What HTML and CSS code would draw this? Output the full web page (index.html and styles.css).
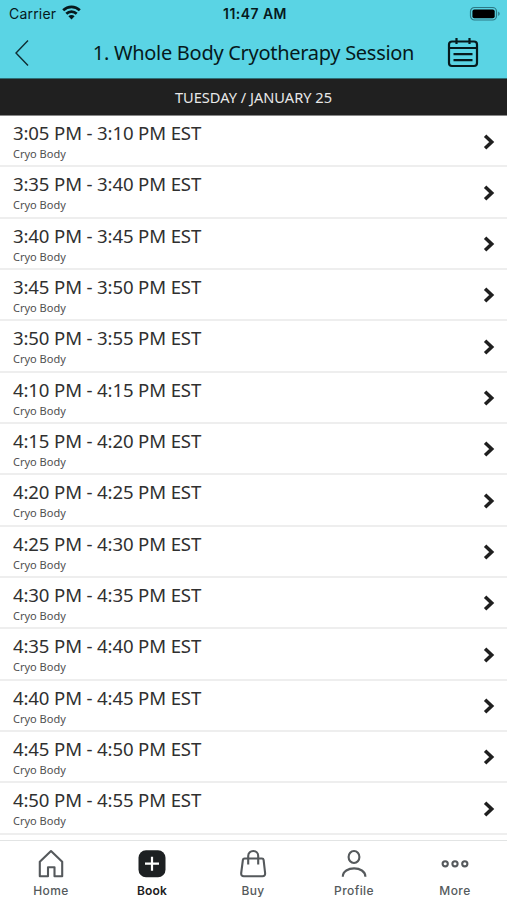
FILE: index.html
```
<!DOCTYPE html>
<html lang="en">
<head>
<meta charset="utf-8">
<title>Book a session</title>
<link rel="stylesheet" href="styles.css">
</head>
<body>
<svg class="defs" width="0" height="0"><symbol id="chev" viewBox="0 0 12 18"><path d="M2.1 2.8 8.7 9l-6.6 6.2" fill="none" stroke="#1f1f1f" stroke-width="3.5"/></symbol></svg>
<div class="app">
  <header class="top">
    <div class="status">
      <div class="carrier"><span>Carrier</span>
        <svg width="19" height="15" viewBox="0 0 19 15"><g fill="none" stroke="#06191c" stroke-width="2.7"><path d="M1.2 5.3a11.8 11.8 0 0 1 16.6 0"/><path d="M4.3 8.8a7.4 7.4 0 0 1 10.4 0"/></g><path d="M6.4 11.2a4.3 4.3 0 0 1 6.2 0l-3.1 3.2z" fill="#06191c"/></svg>
      </div>
      <div class="clock">11:47 AM</div>
      <svg class="battery" width="32" height="16" viewBox="0 0 32 16"><rect x="1.5" y="1.5" width="26" height="12.5" rx="4" fill="none" stroke="#2c7985" stroke-width="1.2"/><rect x="3.4" y="3.4" width="22.3" height="8.8" rx="2" fill="#000"/><path d="M29.2 5.6c2 .8 2 3.5 0 4.3z" fill="#2c7985"/></svg>
    </div>
    <div class="nav">
      <svg class="back" width="16" height="28" viewBox="0 0 16 28"><path d="M14 1.5 2 14l12 12.5" fill="none" stroke="#102d32" stroke-width="1.4"/></svg>
      <h1>1. Whole Body Cryotherapy Session</h1>
      <svg class="cal" width="32" height="32" viewBox="0 0 32 32"><g fill="none" stroke="#06191c" stroke-width="2.2"><rect x="2" y="4.5" width="28" height="24.5" rx="3"/><path d="M2 11h28M9.5 1v6M22.500 1v6M6.500 17.200h19M6.500 23.200h19"/></g></svg>
    </div>
  </header>
  <div class="date">TUESDAY / JANUARY 25</div>
  <main class="list">
    <div class="row"><div><p class="time">3:05 PM - 3:10 PM EST</p><p class="kind">Cryo Body</p></div><svg class="chev"><use href="#chev"/></svg></div>
    <div class="row"><div><p class="time">3:35 PM - 3:40 PM EST</p><p class="kind">Cryo Body</p></div><svg class="chev"><use href="#chev"/></svg></div>
    <div class="row"><div><p class="time">3:40 PM - 3:45 PM EST</p><p class="kind">Cryo Body</p></div><svg class="chev"><use href="#chev"/></svg></div>
    <div class="row"><div><p class="time">3:45 PM - 3:50 PM EST</p><p class="kind">Cryo Body</p></div><svg class="chev"><use href="#chev"/></svg></div>
    <div class="row"><div><p class="time">3:50 PM - 3:55 PM EST</p><p class="kind">Cryo Body</p></div><svg class="chev"><use href="#chev"/></svg></div>
    <div class="row"><div><p class="time">4:10 PM - 4:15 PM EST</p><p class="kind">Cryo Body</p></div><svg class="chev"><use href="#chev"/></svg></div>
    <div class="row"><div><p class="time">4:15 PM - 4:20 PM EST</p><p class="kind">Cryo Body</p></div><svg class="chev"><use href="#chev"/></svg></div>
    <div class="row"><div><p class="time">4:20 PM - 4:25 PM EST</p><p class="kind">Cryo Body</p></div><svg class="chev"><use href="#chev"/></svg></div>
    <div class="row"><div><p class="time">4:25 PM - 4:30 PM EST</p><p class="kind">Cryo Body</p></div><svg class="chev"><use href="#chev"/></svg></div>
    <div class="row"><div><p class="time">4:30 PM - 4:35 PM EST</p><p class="kind">Cryo Body</p></div><svg class="chev"><use href="#chev"/></svg></div>
    <div class="row"><div><p class="time">4:35 PM - 4:40 PM EST</p><p class="kind">Cryo Body</p></div><svg class="chev"><use href="#chev"/></svg></div>
    <div class="row"><div><p class="time">4:40 PM - 4:45 PM EST</p><p class="kind">Cryo Body</p></div><svg class="chev"><use href="#chev"/></svg></div>
    <div class="row"><div><p class="time">4:45 PM - 4:50 PM EST</p><p class="kind">Cryo Body</p></div><svg class="chev"><use href="#chev"/></svg></div>
    <div class="row"><div><p class="time">4:50 PM - 4:55 PM EST</p><p class="kind">Cryo Body</p></div><svg class="chev"><use href="#chev"/></svg></div>
  </main>
  <nav class="tabs">
    <div class="tab"><svg viewBox="0 0 30 30"><path d="M3.8 27.300V12.800L15 2l11.200 10.800v14.500h-7.700v-9h-6.500v9z"/></svg><span>Home</span></div>
    <div class="tab active"><svg viewBox="0 0 30 30"><rect class="plate" x="1.500" y="1.200" width="27" height="27" rx="7.500"/><path class="plus" d="M15 7.700v14M8 14.700h14"/></svg><span>Book</span></div>
    <div class="tab"><svg viewBox="0 0 30 30"><path d="M6.500 9.500h17.500q1.400 0 1.600 1.400l1.500 13.100q.3 3.200-2.600 3.200H5.800q-2.900 0-2.600-3.200l1.700-13.100q.2-1.400 1.600-1.400zM10.200 15.500V7c0-6.700 10-6.700 10 0v8.500"/></svg><span>Buy</span></div>
    <div class="tab"><svg viewBox="0 0 30 30"><ellipse cx="15" cy="8" rx="5.400" ry="6"/><path d="M3.800 27.800c0-11.200 22.600-11.200 22.600 0"/></svg><span>Profile</span></div>
    <div class="tab"><svg viewBox="0 0 30 30"><circle cx="5.200" cy="14.800" r="2.600"/><circle cx="15" cy="14.800" r="2.600"/><circle cx="24.800" cy="14.800" r="2.600"/></svg><span>More</span></div>
  </nav>
</div>
</body>
</html>
```
FILE: styles.css
```
* { box-sizing: border-box; }
body { margin: 0; font-family: "Noto Sans", sans-serif; background: #fff; }
p, h1 { margin: 0; }
.defs { display: block; }
.app { width: 507px; height: 900px; display: flex; flex-direction: column; overflow: hidden; }
.top { height: 79px; flex: none; background: #5ad4e4; border-bottom: 1px solid #2f6d75; color: #06191c; }
.status { height: 27px; display: grid; grid-template-columns: 1fr auto 1fr; align-items: center; padding: 0 6px 0 9px; font-family: Inter, sans-serif; font-size: 14px; }
.carrier { display: flex; align-items: center; gap: 6px; letter-spacing: .2px; }
.carrier svg { margin-top: -2px; }
.clock { font-weight: 600; letter-spacing: .45px; }
.battery { justify-self: end; }
.nav { height: 51px; display: grid; grid-template-columns: 80px 1fr 80px; align-items: center; }
.back { margin-left: 14px; }
.nav h1 { font-size: 20px; font-weight: 400; letter-spacing: -.29px; text-align: center; white-space: nowrap; line-height: 28px; }
.cal { margin-left: 20px; }
.date { height: 36px; flex: none; background: #202020; color: #e8e8e8; font-size: 14.6px; line-height: 37px; text-align: center; }
.list { flex: 1; min-height: 0; display: flex; flex-direction: column; border-top: .5px solid #888; }
.row { height: 51.33px; flex: none; display: flex; justify-content: space-between; align-items: flex-start; padding: 5px 12px 0 13px; border-bottom: 2px solid #eee; }
.time { font-size: 18.6px; letter-spacing: -.14px; line-height: 24px; color: #303030; white-space: nowrap; }
.kind { font-size: 11px; line-height: 16px; margin-top: 1px; color: #505050; }
.chev { width: 12px; height: 18px; margin-top: 11.5px; }
.tabs { height: 60px; flex: none; display: grid; grid-template-columns: repeat(5, 101px); border-top: 1px solid #e2e4e4; background: #fff; }
.tab { display: flex; flex-direction: column; align-items: center; padding-top: 8px; font-family: Inter, sans-serif; font-size: 12px; font-weight: 500; color: #555a5c; letter-spacing: .4px; }
.tab svg { width: 30px; height: 30px; margin-left: 1px; fill: none; stroke: #55595c; stroke-width: 2.1; stroke-linejoin: round; }
.tab span { line-height: 16px; margin-top: 4px; margin-left: 1px; }
.active { color: #1d2022; font-weight: 600; letter-spacing: .2px; }
.tab .plate { fill: #1d2022; stroke: none; }
.tab .plus { stroke: #fff; stroke-width: 2.2; }
```
